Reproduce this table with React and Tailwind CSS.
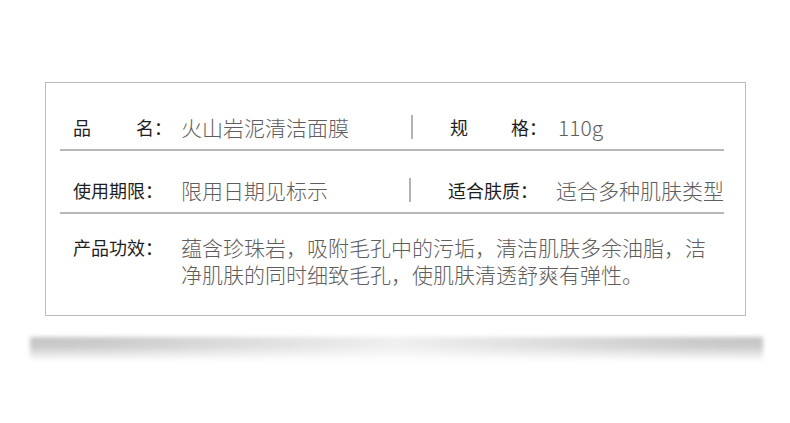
import React from "react";

const cjk = "font-['Noto_Sans_CJK_SC','Noto_Sans',sans-serif]";

const Label = ({ children }) => (
  <div className="w-[108px] shrink-0 text-[18px] leading-[24px] text-[#1e1e1e] whitespace-nowrap">{children}</div>
);

const Value = ({ children }) => (
  <div className="text-[21px] leading-[24px] font-light text-[#5e5e5e] whitespace-nowrap">{children}</div>
);

const Cell = ({ label, value }) => (
  <div className="flex items-center">
    <Label>{label}</Label>
    <Value>{value}</Value>
  </div>
);

const Sep = () => <div className="w-[2px] h-[24px] bg-[#b4b4b4] mt-[1px]"></div>;

const App = () => {
  return (
    <div className={`w-[790px] h-[423px] bg-white pt-[82px] ${cjk}`}>
      <div className="ml-[45px] w-[701px] h-[234px] border border-[#bdbdbd] pl-[14px] pr-[21px]">
        {/* 品名 / 规格 */}
        <div className="flex items-center pt-[31px] pb-[10px] border-b-2 border-[#b8b8b8]">
          <div className="w-[351px] pl-[13px]">
            <Cell
              label={
                <span className="flex">
                  <span className="w-[63px]">品</span>
                  <span>名：</span>
                </span>
              }
              value="火山岩泥清洁面膜"
            />
          </div>
          <Sep />
          <div className="pl-[37px]">
            <Cell
              label={
                <span className="flex">
                  <span className="w-[61px]">规</span>
                  <span>格：</span>
                </span>
              }
              value="110g"
            />
          </div>
        </div>

        {/* 使用期限 / 适合肤质 */}
        <div className="flex items-center pt-[26px] pb-[10px] border-b-2 border-[#b8b8b8]">
          <div className="w-[351px] pl-[13px]">
            <Cell label="使用期限：" value="限用日期见标示" />
          </div>
          <Sep />
          <div className="pl-[37px]">
            <Cell label="适合肤质：" value="适合多种肌肤类型" />
          </div>
        </div>

        {/* 产品功效 */}
        <div className="flex items-start pt-[20px] pl-[13px]">
          <div className="w-[108px] shrink-0 text-[18px] leading-[27px] text-[#1e1e1e]">产品功效：</div>
          <div className="text-[21px] leading-[27px] font-light text-[#5e5e5e] whitespace-nowrap">
            蕴含珍珠岩，吸附毛孔中的污垢，清洁肌肤多余油脂，洁
            <br />
            净肌肤的同时细致毛孔，使肌肤清透舒爽有弹性。
          </div>
        </div>
      </div>

      {/* curled paper shadow */}
      <div className="mt-[21px] ml-[30px] w-[733px] h-[24px] blur-[2px] bg-[linear-gradient(180deg,rgba(255,255,255,0)_0%,rgba(255,255,255,0.1)_40%,#ffffff_100%),linear-gradient(90deg,#c4c4c4_0%,#c8c8c8_10%,#dadada_28%,#efefef_50%,#dadada_72%,#c8c8c8_90%,#c4c4c4_100%)]"></div>
    </div>
  );
};

export default App;
